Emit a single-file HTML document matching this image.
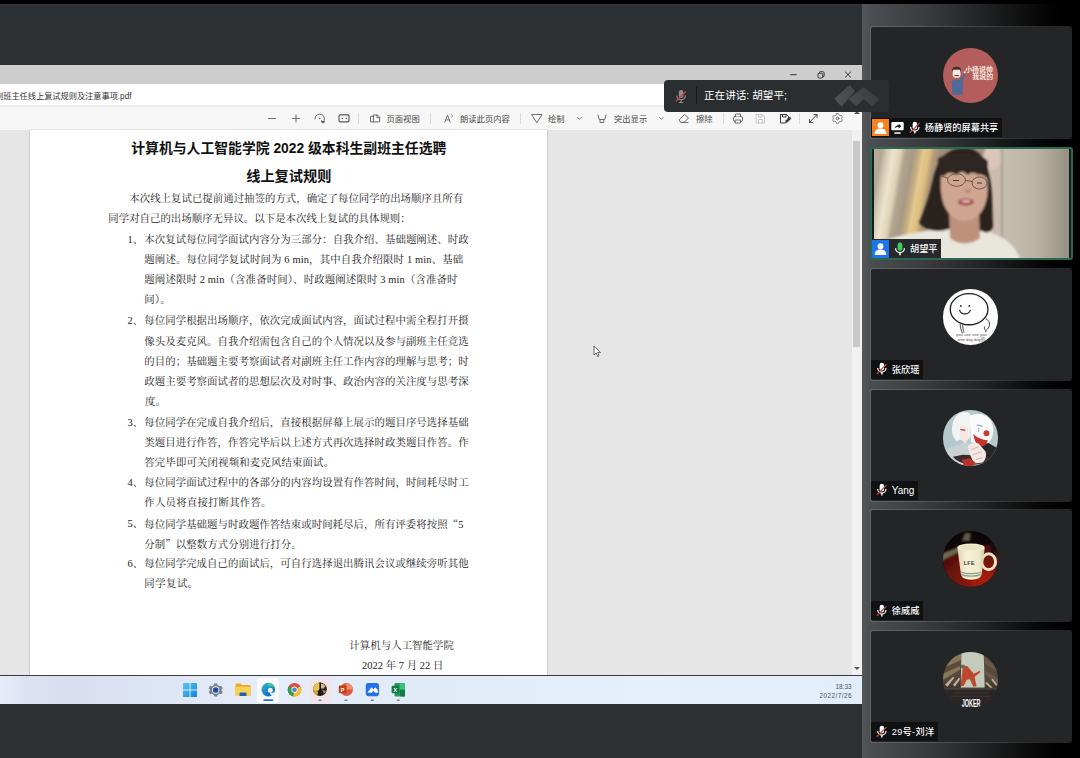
<!DOCTYPE html>
<html lang="zh-CN">
<head>
<meta charset="utf-8">
<title>腾讯会议</title>
<style>
*{box-sizing:border-box;margin:0;padding:0}
html,body{width:1080px;height:758px;overflow:hidden;background:#2c3033}
body{position:relative;font-family:"Liberation Sans","Noto Sans CJK SC",sans-serif;color:#222}
.abs{position:absolute}
#topblack{left:0;top:0;width:1080px;height:4px;background:#000}
#topline{left:0;top:4px;width:862px;height:2px;background:#323537}
/* shared screen */
#share{left:0;top:65px;width:862px;height:639px;overflow:hidden;background:#e6e6e6}
#wtitle{left:0;top:0;width:862px;height:19px;background:#cdcdcd}
#fname{left:0;top:19px;width:862px;height:21px;background:#fff}
#fname span{position:absolute;left:-5px;top:6.5px;font-size:8.2px;line-height:11px;color:#333;white-space:nowrap}
#tbar{left:0;top:40px;width:862px;height:25px;background:#f7f7f7;border-top:2px solid #ececec}
#tbar .t{position:absolute;top:6.9px;font-size:8.3px;line-height:11px;color:#4a4a4a;white-space:nowrap}
#tbar .sep{position:absolute;top:5.5px;width:1px;height:11px;background:#dadada}
#pdf{left:0;top:65px;width:852px;height:546px;background:#e6e6e6}
#page{left:30px;top:0;width:517px;height:546px;background:#fff;box-shadow:0 0 1.5px rgba(0,0,0,.35)}
#sbar{left:852px;top:65px;width:10px;height:546px;background:#f1f1f1}
#sthumb{left:853px;top:76px;width:7px;height:206px;background:#c8c8c8}
#task{left:0;top:610px;width:862px;height:29px;background:linear-gradient(90deg,#e7eefa 0%,#dde2f3 3%,#d9ddf0 8%,#dde4f4 17%,#e5edf9 30%,#e1ebf8 50%,#e6f0fb 75%,#e1edf9 100%);border-top:1px solid #3a3d40}
/* pdf text */
.h{position:absolute;white-space:nowrap;font-family:"Liberation Sans","Noto Sans CJK SC",sans-serif;font-weight:700;color:#111;text-align:center;left:0;width:517px}
.l{position:absolute;white-space:nowrap;font-family:"Liberation Serif","Noto Serif CJK SC",serif;font-size:10.4px;line-height:14px;color:#222;height:14px}
.j{text-align:justify;text-align-last:justify}
/* right panel */
#panel{left:862px;top:4px;width:218px;height:754px;background:linear-gradient(90deg,#54585b 0%,#4b4e51 4%,#3a3c3e 28%,#222324 55%,#060606 83%,#000 92%)}
.tile{position:absolute;left:7.8px;width:202.4px;height:113px;background:#232527;background-clip:padding-box;border:1px solid rgba(255,255,255,.14);border-radius:3px;overflow:hidden}
.av{position:absolute;left:71.8px;top:20.8px;width:55.6px;height:55.6px;border-radius:50%;overflow:hidden}
.lab{position:absolute;left:0;bottom:1px;height:19px;background:#101112;color:#fff;font-weight:500;font-size:9.2px;line-height:20.4px;white-space:nowrap;padding:0 3.5px 0 32px}
.tile svg{display:block}
.av>svg{width:55.6px;height:55.6px}
.lab svg.mic{position:absolute;left:5px;top:2.4px}
.lab.l2{padding-left:21px}
.vt{border:2px solid #2b6850;background:#1a1c1d}
.q{font-family:"Noto Serif CJK SC",serif}
</style>
</head>
<body>
<div class="abs" id="topblack"></div>
<div class="abs" id="topline"></div>

<div class="abs" id="share">
  <div class="abs" id="wtitle">
    <svg class="abs" style="left:780px;top:0" width="82" height="19" viewBox="0 0 82 19" fill="none" stroke="#333" stroke-width="1">
      <path d="M10.300 9.700h6.400"/>
      <rect x="38" y="8.300" width="4.600" height="4.800" rx="1.100"/><path d="M39.300 8.300v-.6a1 1 0 0 1 1-1h2.600a1.200 1.200 0 0 1 1.200 1.200v2.800a1 1 0 0 1-1 1h-.5"/>
      <path d="M65.200 6.800l5.600 5.600M70.800 6.800l-5.600 5.600"/>
    </svg>
  </div>
  <div class="abs" id="fname"><span>副班主任线上复试规则及注意事项.pdf</span></div>
  <div class="abs" id="tbar">
    <svg class="abs" style="left:260px;top:-1.700px" width="602" height="24" viewBox="260 0 602 24" fill="none" stroke="#666" stroke-width=".95" stroke-linecap="round" stroke-linejoin="round">
      <!-- minus / plus -->
      <path d="M268.5 13.5h7M292.5 13.5h7M296 10v7"/>
      <!-- rotate -->
      <path d="M314.900 14a4.800 4.800 0 1 1 8 3.400"/><path d="M321.300 16.300l1.300 1.700 1.700-1z" fill="#555" stroke="#555"/><circle cx="319.700" cy="13.500" r=".8" fill="#555" stroke="none"/>
      <!-- fit width -->
      <rect x="339" y="9.800" width="10" height="7" rx="1.300" stroke="#555" stroke-width="1.150"/><circle cx="342.300" cy="13.400" r=".75" fill="#555" stroke="none"/><circle cx="346.300" cy="13.400" r=".75" fill="#555" stroke="none"/>
      <!-- page view -->
      <path d="M373.800 10h3.600l2.300 2.300v4.600h-5.900zM373.800 11.300h-3.300v5.600h3.300M377 10v2.700h2.700"/>
      <!-- read aloud A -->
      <path d="M444.800 17.300l2.700-7.300 2.700 7.300M445.800 14.900h3.400" stroke-width=".9"/><path d="M451.800 9.800c.8.600.8 1.800 0 2.400" stroke-width=".8"/>
      <!-- draw (triangle pen) -->
      <path d="M532 9.5h10l-5 8z"/>
      <!-- chevrons -->
      <path d="M577.5 12.5l1.8 1.8 1.8-1.8M659.5 12.5l1.8 1.8 1.8-1.8" stroke="#777"/>
      <!-- highlighter -->
      <path d="M598 10l1.300 4.500h5.400l1.300-4.500M600 14.500v3h3.800v-3"/>
      <!-- eraser -->
      <path d="M679.5 14.500l5-5 4 3.5-4.500 4.500h-3zM682 17.5h6"/>
      <!-- print -->
      <rect x="733.5" y="11.500" width="9" height="5" rx="1.500"/><path d="M735.5 11.500v-2.500h5v2.500M735.500 15h5v3h-5z" fill="#f7f7f7"/>
      <!-- save (disabled) -->
      <path d="M756.5 9.500h6l2 2v6.500h-8z M758.500 9.500v2.500h3.500v-2.500 M758.500 18v-3.500h4V18" stroke="#c4c4c4"/>
      <!-- save as -->
      <path d="M780.500 9.500h6l2 2v2.500M785 18h-4.500v-8.500 M782.500 9.500v2.500h3.500v-2.500" stroke="#333"/><path d="M785.500 17.500l.5-2 3.500-3.500 1.500 1.500-3.500 3.500z" fill="#333" stroke="#333" stroke-width=".6"/>
      <!-- fullscreen -->
      <path d="M809.500 17.500l7.500-8M814 9.500h3v3M809.500 14.500v3h3" stroke="#444"/>
      <!-- settings gear -->
      <circle cx="837.500" cy="13.500" r="1.400"/>
      <path d="M836.300 8.800h2.400l.5 1.600 1.500.9 1.600-.4 1.200 2.100-1.100 1.200v1l1.100 1.200-1.200 2.100-1.600-.4-1.500.9-.5 1.600h-2.400l-.5-1.600-1.500-.9-1.600.4-1.200-2.100 1.100-1.200v-1l-1.100-1.200 1.200-2.100 1.600.4 1.500-.9z" transform="translate(837.5 13.500) scale(.82) translate(-837.5 -14.700)"/>
    </svg>
    <div class="sep" style="left:358px"></div>
    <div class="sep" style="left:430px"></div>
    <div class="sep" style="left:520px"></div>
    <div class="sep" style="left:723px"></div>
    <div class="sep" style="left:799px"></div>
    <div class="t" style="left:386.500px">页面视图</div>
    <div class="t" style="left:460px">朗读此页内容</div>
    <div class="t" style="left:548px">绘制</div>
    <div class="t" style="left:614px">突出显示</div>
    <div class="t" style="left:696px">擦除</div>
  </div>
  <div class="abs" id="pdf"><div class="abs" id="page">
    <div class="h" style="top:9.400px;font-size:13.830px;line-height:18px;left:.3px">计算机与人工智能学院 2022 级本科生副班主任选聘</div>
    <div class="h" style="top:37px;font-size:14.200px;line-height:18px;left:.3px">线上复试规则</div>
<div class="l" style="left:99.3px;top:62.0px;letter-spacing:0.044px">本次线上复试已提前通过抽签的方式，确定了每位同学的出场顺序且所有</div>
<div class="l" style="left:78.3px;top:82.3px;letter-spacing:0.037px">同学对自己的出场顺序无异议。以下是本次线上复试的具体规则：</div>
<div class="l" style="left:97.5px;top:102.6px;letter-spacing:0.000px">1、</div>
<div class="l" style="left:114.3px;top:102.6px;letter-spacing:0.074px">本次复试每位同学面试内容分为三部分：自我介绍、基础题阐述、时政</div>
<div class="l" style="left:114.3px;top:123.2px;letter-spacing:0.168px">题阐述。每位同学复试时间为 6 min，其中自我介绍限时 1 min、基础</div>
<div class="l" style="left:114.3px;top:143.2px;letter-spacing:0.154px">题阐述限时 2 min（含准备时间）、时政题阐述限时 3 min（含准备时</div>
<div class="l" style="left:114.3px;top:163.3px;letter-spacing:0.139px">间）。</div>
<div class="l" style="left:97.5px;top:184.4px;letter-spacing:0.000px">2、</div>
<div class="l" style="left:114.3px;top:184.4px;letter-spacing:0.074px">每位同学根据出场顺序，依次完成面试内容，面试过程中需全程打开摄</div>
<div class="l" style="left:114.3px;top:204.7px;letter-spacing:0.074px">像头及麦克风。自我介绍需包含自己的个人情况以及参与副班主任竞选</div>
<div class="l" style="left:114.3px;top:224.9px;letter-spacing:0.074px">的目的；基础题主要考察面试者对副班主任工作内容的理解与思考；时</div>
<div class="l" style="left:114.3px;top:245.2px;letter-spacing:0.074px">政题主要考察面试者的思想层次及对时事、政治内容的关注度与思考深</div>
<div class="l" style="left:115.0px;top:265.4px;letter-spacing:0.000px">度。</div>
<div class="l" style="left:97.5px;top:285.7px;letter-spacing:0.000px">3、</div>
<div class="l" style="left:114.3px;top:285.7px;letter-spacing:0.074px">每位同学在完成自我介绍后，直接根据屏幕上展示的题目序号选择基础</div>
<div class="l" style="left:114.3px;top:306.0px;letter-spacing:0.074px">类题目进行作答，作答完毕后以上述方式再次选择时政类题目作答。作</div>
<div class="l" style="left:114.3px;top:326.2px;letter-spacing:0.159px">答完毕即可关闭视频和麦克风结束面试。</div>
<div class="l" style="left:97.5px;top:346.2px;letter-spacing:0.000px">4、</div>
<div class="l" style="left:114.3px;top:346.2px;letter-spacing:0.074px">每位同学面试过程中的各部分的内容均设置有作答时间，时间耗尽时工</div>
<div class="l" style="left:114.3px;top:366.4px;letter-spacing:0.226px">作人员将直接打断其作答。</div>
<div class="l" style="left:97.5px;top:386.7px;letter-spacing:0.000px">5、</div>
<div class="l" style="left:114.3px;top:386.7px;letter-spacing:0.070px">每位同学基础题与时政题作答结束或时间耗尽后，所有评委将按照<span class="q">“</span>5</div>
<div class="l" style="left:114.3px;top:406.9px;letter-spacing:0.103px">分制<span class="q">”</span>以整数方式分别进行打分。</div>
<div class="l" style="left:97.5px;top:427.0px;letter-spacing:0.000px">6、</div>
<div class="l" style="left:114.3px;top:427.0px;letter-spacing:0.074px">每位同学完成自己的面试后，可自行选择退出腾讯会议或继续旁听其他</div>
<div class="l" style="left:114.3px;top:447.4px;letter-spacing:0.489px">同学复试。</div>
<div class="l" style="left:319.3px;top:509.0px;letter-spacing:0.079px">计算机与人工智能学院</div>
<div class="l" style="left:332.0px;top:528.6px;letter-spacing:0.058px">2022 年 7 月 22 日</div>
  </div></div>
  <div class="abs" id="sbar"></div>
  <div class="abs" id="sthumb"></div>
  <div class="abs" style="left:854px;top:46px;width:0;height:0;border-left:3px solid transparent;border-right:3px solid transparent;border-bottom:3.500px solid #555"></div>
  <div class="abs" style="left:854px;top:602px;width:0;height:0;border-left:3px solid transparent;border-right:3px solid transparent;border-top:3.500px solid #555"></div>
  <!-- mouse cursor -->
  <svg class="abs" style="left:593px;top:280px" width="9" height="13" viewBox="0 0 9 13"><path d="M1 1v9l2.200-2 1.500 3.500 1.400-.6-1.500-3.400h3z" fill="#fff" stroke="#4a4a4a" stroke-width=".8" stroke-linejoin="round"/></svg>
  <div class="abs" id="task">
    <!-- highlighted app backgrounds -->
    <div class="abs" style="left:257px;top:2px;width:22px;height:25px;border-radius:3px;background:rgba(255,255,255,.75)"></div>
    <div class="abs" style="left:308.500px;top:2px;width:23px;height:25px;border-radius:3px;background:#f2e5ea"></div>
    <svg class="abs" style="left:178px;top:0" width="232" height="28" viewBox="178 0 232 28">
      <defs>
        <linearGradient id="wn" x1="0" y1="0" x2="1" y2="1"><stop offset="0" stop-color="#5cc6f5"/><stop offset="1" stop-color="#1583d8"/></linearGradient>
        <linearGradient id="eg" x1="0" y1="0" x2="1" y2="1"><stop offset="0" stop-color="#35c1a6"/><stop offset=".5" stop-color="#1b86d9"/><stop offset="1" stop-color="#0c59a4"/></linearGradient>
      </defs>
      <g filter="url(#b1)">
      <!-- windows -->
      <path d="M183 7h6.500v6.500H183zM190.500 7h6.500v6.500h-6.500zM183 14.500h6.500V21H183zM190.500 14.500h6.500V21h-6.500z" fill="url(#wn)"/>
      <!-- settings gear -->
      <g transform="translate(215.700 14) scale(.92)">
        <path d="M-1.600-7.200h3.200l.6 2 1.800 1 2-.5 1.600 2.800-1.400 1.500v.8l1.400 1.500-1.600 2.800-2-.5-1.800 1-.6 2h-3.200l-.6-2-1.800-1-2 .5-1.600-2.800 1.400-1.500v-.8l-1.400-1.500 1.600-2.800 2 .5 1.800-1z" fill="#77818f"/>
        <circle r="4" fill="#e9eef6"/><circle r="3.100" fill="#2c5aa6"/><circle r="1.300" fill="#1b3a73"/>
      </g>
      <!-- folder -->
      <path d="M235.500 8.500q0-1 1-1h4l1.500 1.500h7.500q1 0 1 1V19q0 1-1 1h-13q-1 0-1-1z" fill="#e9a923"/>
      <path d="M235.500 10.800h15V19q0 1-1 1h-13q-1 0-1-1z" fill="#f9d153"/>
      <path d="M239.500 20v-2.600q0-1 1-1h5q1 0 1 1V20z" fill="#1f63b8"/>
      <!-- edge -->
      <circle cx="268.300" cy="13.600" r="6.800" fill="url(#eg)"/>
      <path d="M268.300 6.800a6.800 6.800 0 0 1 6.800 6.300c-1.500-2.800-5-3.600-7.300-2.300z" fill="#3fc98c"/>
      <circle cx="270.300" cy="14.300" r="2.500" fill="#f2f7fd"/>
      <path d="M270 16.600c1.800.9 4 .3 5-1.300-.3 2-1.500 3.600-3 4.400-1.500-.6-2.300-1.700-2-3.100z" fill="#e7eefa"/>
      <rect x="263.300" y="23.200" width="10" height="1.800" rx=".9" fill="#1f77d0"/>
      <!-- chrome -->
      <circle cx="294.500" cy="13.700" r="6.800" fill="#e24a3a"/>
      <path d="M294.500 13.700L288.600 10.300A6.800 6.800 0 0 0 293.300 20.400z" fill="#2f9e4f"/>
      <path d="M294.500 13.700L293.300 20.400A6.800 6.800 0 0 0 300.400 10.300z" fill="#f5c230"/>
      <circle cx="294.500" cy="13.700" r="3.100" fill="#f4f4f4"/><circle cx="294.500" cy="13.700" r="2.300" fill="#4a86e0"/>
      <!-- photo app -->
      <circle cx="320" cy="13.300" r="6.800" fill="#28231d"/>
      <path d="M320 6.500a6.800 6.800 0 0 0-6.700 8l3.500 1 3.200-2.500z" fill="#e8c648"/>
      <path d="M313.600 15.500l3-1 1.500 2-1 3a6.800 6.800 0 0 1-3.500-4z" fill="#cfa93a"/>
      <path d="M321 7.500c2 .2 3.500 1.200 4.300 2.600l-1.800 2.600-2.500-.5z" fill="#d7b98c"/>
      <path d="M322.500 13.500l3.500 1.500-.5 2.500-2.500-1z" fill="#9a7a55"/>
      <path d="M320 6.500v13.600" stroke="#17130f" stroke-width="1.100"/>
      <rect x="318.500" y="23.600" width="3" height="1.300" rx=".6" fill="#7b7f86"/>
      <!-- powerpoint -->
      <g transform="translate(-1 0)">
      <circle cx="347.500" cy="13.500" r="6.500" fill="#dd5a38"/>
      <path d="M347.500 7a6.500 6.500 0 0 1 6.500 6.500h-6.500z" fill="#f0906c"/>
      <rect x="339.800" y="9.600" width="7.600" height="7.600" rx="1" fill="#c5401f"/>
      <text x="343.600" y="15.800" text-anchor="middle" font-family="'Liberation Sans',sans-serif" font-weight="700" font-size="6" fill="#fff">P</text>
      <rect x="345.500" y="23.600" width="3" height="1.300" rx=".6" fill="#7b7f86"/>
      </g>
      <!-- tencent meeting -->
      <rect x="365.800" y="7" width="13.200" height="13.200" rx="2.400" fill="#2271e8"/>
      <path d="M367.500 16.500l3.300-4.500q.8-.9 1.600 0l1 1.400 1-1.400q.8-.9 1.600 0l2 2.600v2.200h-3l-1.600-2-1.600 2z" fill="#fff"/>
      <rect x="370.800" y="23.600" width="3" height="1.300" rx=".6" fill="#7b7f86"/>
      <!-- excel -->
      <rect x="394.500" y="7" width="10.500" height="13.500" rx="1.200" fill="#1f9d5a"/>
      <path d="M399.800 7h5.200v6.700h-5.200z" fill="#35c47a"/><path d="M399.800 13.700h5.200v6.800h-4q-1.200 0-1.200-1.200z" fill="#167a45"/>
      <rect x="391.600" y="9.800" width="7.400" height="7.400" rx="1" fill="#127a42"/>
      <text x="395.300" y="15.700" text-anchor="middle" font-family="'Liberation Sans',sans-serif" font-weight="700" font-size="5.600" fill="#fff">X</text>
      <rect x="396.800" y="23.600" width="3" height="1.300" rx=".6" fill="#7b7f86"/>
      </g>
    </svg>
    <div class="abs" style="right:10.500px;top:5.500px;font-size:6.400px;line-height:9.500px;color:#4c4f55;text-align:right;white-space:nowrap">18:33<br><span style="letter-spacing:.45px;margin-right:-.45px">2022/7/26</span></div>
  </div>
</div>
<div class="abs" id="panel">
  <svg width="0" height="0" style="position:absolute">
    <defs>
      <symbol id="micoff" viewBox="0 0 12 14">
        <rect x="3.8" y="0.8" width="4.6" height="8" rx="2.300" fill="#fff"/>
        <path d="M1.800 6.200a4.300 4.300 0 0 0 8.600 0" stroke="#fff" fill="none" stroke-width="1.300"/>
        <path d="M6.100 10.500v2.500" stroke="#fff" stroke-width="1.400"/>
        <path d="M0.800 12.200L11 2.200" stroke="#c9453c" stroke-width="1.300"/>
      </symbol>
      <symbol id="user" viewBox="0 0 18 18">
        <circle cx="9" cy="6.300" r="3.100" fill="#fff"/>
        <path d="M2.800 15.500c0-3.600 2.600-5.600 6.200-5.600s6.200 2 6.200 5.600z" fill="#fff"/>
      </symbol>
      <filter id="b1" x="-5%" y="-5%" width="110%" height="110%"><feGaussianBlur stdDeviation="0.600"/></filter>
      <filter id="b2" x="-10%" y="-10%" width="120%" height="120%"><feGaussianBlur stdDeviation="1.300"/></filter>
      <filter id="b3" x="-20%" y="-20%" width="140%" height="140%"><feGaussianBlur stdDeviation="2.500"/></filter>
    </defs>
  </svg>

  <!-- tile 1 : screen sharer -->
  <div class="tile" style="top:21.800px">
    <div class="av" style="background:#b55d5c">
      <svg width="56" height="56" viewBox="0 0 56 56">
        <g filter="url(#b1)">
          <path d="M8.500 33.500l3-1.500h5l3.500-4.500 1.500-4 1.200.600-1.200 5-1.500 4.400v13.500h-10.500z" fill="#4d6b98"/>
          <rect x="9.800" y="20.500" width="7.800" height="9.500" rx="2.500" fill="#f1e9e2"/>
          <path d="M9.300 24.500v-2.500c0-2 1.500-3 4.400-3s4.400 1 4.400 3v2.500l-1.200-2.500h-6.400z" fill="#45302b"/>
          <path d="M11.500 27.300h4.500v1h-4.500z" fill="#45302b"/>
          <circle cx="21.800" cy="24.500" r="1.100" fill="#f1e9e2"/>
        </g>
        <text x="22.300" y="24.200" font-family="'Liberation Sans','Noto Sans CJK SC',sans-serif" font-weight="700" font-size="7" fill="#f6e7da">小杨说帅</text>
        <text x="29.500" y="31.200" font-family="'Liberation Sans','Noto Sans CJK SC',sans-serif" font-weight="700" font-size="7" fill="#f6e7da">我说的</text>
      </svg>
    </div>
    <div class="lab" style="padding-left:54px">
      <span style="position:absolute;left:1px;top:1px;width:17px;height:17.500px;background:#f6821f"><svg width="17" height="17.500"><use href="#user" x="0" y="0" width="17" height="17.500"/></svg></span>
      <svg style="position:absolute;left:20px;top:4px" width="13" height="12" viewBox="0 0 13 12"><rect x="0.300" y="0" width="12.400" height="8.300" rx="1" fill="#fff"/><rect x="3.300" y="10.200" width="6.400" height="1.500" rx=".5" fill="#fff"/><path d="M3.600 6.600c.4-2.200 2-3.300 4-3.300v-1.500l2.700 2.400-2.700 2.400v-1.500c-1.600 0-2.900.3-4 1.500z" fill="#1a1a1a"/></svg>
      <svg style="position:absolute;left:38px;top:3px" width="11.500" height="13.500"><use href="#micoff" width="11.500" height="13.500"/></svg>
      杨静贤的屏幕共享
    </div>
  </div>

  <!-- tile 2 : speaking video -->
  <div class="tile vt" style="top:142.700px;left:7.500px;width:203.200px;height:113.500px">
    <svg style="position:absolute;left:2px;top:0.500px" width="195" height="109" viewBox="0 0 195 109">
      <defs>
        <linearGradient id="cur" gradientUnits="userSpaceOnUse" x1="0" x2="150" y1="0" y2="0"><stop offset="0.0000" stop-color="#b7ad9c"/><stop offset="0.0533" stop-color="#b3a793"/><stop offset="0.0933" stop-color="#d6ccb5"/><stop offset="0.1333" stop-color="#ece4cc"/><stop offset="0.1800" stop-color="#dfd3b7"/><stop offset="0.2133" stop-color="#b3a691"/><stop offset="0.2667" stop-color="#a69985"/><stop offset="0.3067" stop-color="#c7ae82"/><stop offset="0.3333" stop-color="#e4c88f"/><stop offset="0.3733" stop-color="#ddbe7e"/><stop offset="0.4067" stop-color="#b39a78"/><stop offset="0.4533" stop-color="#9c8c78"/><stop offset="1.0000" stop-color="#a39380"/></linearGradient>
        <linearGradient id="wall" x1="0" x2="1" y1="0" y2="0">
          <stop offset="0" stop-color="#c6bfb0"/><stop offset=".5" stop-color="#bbb4a4"/><stop offset="1" stop-color="#948e7f"/>
        </linearGradient>
        <clipPath id="vc"><rect width="195" height="109"/></clipPath>
      </defs>
      <g clip-path="url(#vc)">
        <rect width="195" height="109" fill="#b3a794"/>
        <rect x="0" y="0" width="150" height="109" fill="url(#cur)" transform="skewX(-10)"/>
        <rect x="113" y="0" width="17" height="109" fill="#cbbbae"/>
        <rect x="127" y="0" width="70" height="109" fill="url(#wall)"/>
        <g filter="url(#b2)">
          <ellipse cx="118" cy="8" rx="9" ry="12" fill="#dcc6ba"/>
          <path d="M128 0v109" stroke="#a9a192" stroke-width="2"/>
          <!-- shirt -->
          <path d="M-2 112l0-14c10-8 30-12 52-16l26-3c6 14 24 14 30 2l12 3c16 6 24 14 29 28z" fill="#e9e6de"/>
          <!-- hair -->
          <path d="M90 -1C70 -1 63 14 59 30C55 48 50 62 45 74C52 82 64 84 75 80L108 82C112 85 118 83 119 77C118 60 119 44 116 30C113 12 106 -1 90 -1Z" fill="#2a221d"/>
          <!-- neck -->
          <path d="M75 60l30 3 1 26c-8 7-23 7-30 0z" fill="#bd917b"/>
          <!-- face -->
          <path d="M67 28C67 21 112 21 113 30C115 42 113 54 108 62C103 69 96 72 90 72C82 72 74 66 70 56C67 48 66 38 67 28Z" fill="#cea691"/>
          <!-- bangs -->
          <path d="M64 10C76 1 104 1 114 12L114 27L108 23L104 26L99 22L94 26L88 22L82 26L76 22L70 27L65 27Z" fill="#2e2520"/>
          <!-- lips -->
          <ellipse cx="92" cy="53" rx="8" ry="3.400" fill="#a9484f"/>
          <ellipse cx="92" cy="52.300" rx="4.500" ry="1.200" fill="#e3c4bf"/>
          <ellipse cx="94" cy="42" rx="3" ry="2" fill="#b98a76"/>
        </g>
        <g filter="url(#b1)" fill="none" stroke="#6c5a4c" stroke-width="1">
          <ellipse cx="82.500" cy="31" rx="9" ry="6.300"/><ellipse cx="105.500" cy="34" rx="7.500" ry="6"/><path d="M91.500 31.500l6.500 1M73.500 29l-7-2M113 33l4-1"/>
          <path d="M79 31.500h6M103 34h5" stroke="#4a3a30" stroke-width="1.200"/>
        </g>
      </g>
    </svg>
    <div class="lab l2" style="left:-1px;bottom:0;height:19px;padding-left:39.500px;padding-right:3px;background:#26282a">
      <span style="position:absolute;left:1px;top:1px;width:17px;height:17.500px;background:#1e74ea"><svg width="17" height="17.500"><use href="#user" width="17" height="17.500"/></svg></span>
      <svg style="position:absolute;left:23px;top:2.500px" width="12" height="14" viewBox="0 0 12 14"><rect x="3.600" y="0.500" width="4.800" height="8.500" rx="2.400" fill="#3ecb53"/><path d="M1.600 6.200a4.400 4.400 0 0 0 8.800 0" stroke="#fff" fill="none" stroke-width="1.300"/><path d="M6 10.500v2.800" stroke="#fff" stroke-width="1.500"/></svg>
      胡望平
    </div>
  </div>

  <!-- tile 3 -->
  <div class="tile" style="top:263.700px">
    <div class="av" style="background:#fdfdfd">
      <svg width="56" height="56" viewBox="0 0 56 56">
        <g filter="url(#b1)" fill="none" stroke="#1d1d1d" stroke-width="1.300" stroke-linecap="round">
          <ellipse cx="26.300" cy="20.300" rx="19" ry="15.700"/>
          <path d="M16.800 21.500c1.500 4.800 8.800 4.800 10.600 0" stroke-width="1.200"/>
          <path d="M18 17h.1M26.500 17h.1" stroke-width="1.800"/>
          <path d="M17.300 35.500c.2 3.500 1 6.500 2.300 9M19.800 36c0 3 .5 5.500 1.300 7.500" stroke-width=".8"/>
          <path d="M43.500 30c3.500 2 4.500 6 2 9.500c-1 1.500-2.500 1.500-2.500 3.500M42 38c-.6 1.300-.3 2.500.5 3.500" stroke-width=".9"/>
        </g>
        <text x="28.700" y="47.600" text-anchor="middle" font-family="'Liberation Sans',sans-serif" font-size="4.300" fill="#555">you see see you</text>
        <text x="28.700" y="52.700" text-anchor="middle" font-family="'Liberation Sans','Noto Sans CJK SC',sans-serif" font-size="4.300" fill="#555">one day day的</text>
      </svg>
    </div>
    <div class="lab l2"><svg class="mic" width="11.500" height="13.500"><use href="#micoff" width="11.500" height="13.500"/></svg>张欣瑶</div>
  </div>

  <!-- tile 4 -->
  <div class="tile" style="top:384.600px">
    <div class="av" style="background:#b5c9cc">
      <svg width="56" height="56" viewBox="0 0 56 56">
        <g filter="url(#b1)">
          <path d="M2 40l22-8 10 8-6 18H4z" fill="#c9d1d2"/>
          <path d="M40 30l14 8v14l-12 6-8-14z" fill="#26272b"/>
          <path d="M9 20C9 8 15 2 22 2s6 4 6 10l-1 16-6 4c-3-3-5-3-7 0-3-4-5-7-5-12z" fill="#f2f4f4"/>
          <path d="M17 16l8 1 1 12-4 5-5-6z" fill="#f3e6e3"/>
          <path d="M17.500 19.500l5 1" stroke="#b5434a" stroke-width="1.300"/>
          <path d="M27 6c8-4 18-2 22 6 3 7 2 15-3 21l-8 3-10-4z" fill="#fafafa"/>
          <path d="M34 15l6 1.500" stroke="#9fb2b8" stroke-width="1.500"/>
          <path d="M36 18v4" stroke="#8fb0c0" stroke-width="1"/>
          <circle cx="43.800" cy="23.400" r="3" fill="#cf3a30"/>
          <path d="M30.500 24c3 3.500 8 6 14.500 6.500-.5 4.500-4 7-8 6-3.500-1-5.500-6-6.500-12.500z" fill="#c4352d"/>
          <path d="M10 47c6 8 26 12 38 2l-6-3-22-1z" fill="#3b2b2d"/><path d="M25 36c3-3 8-4 11-2l7 8c1 4 0 8-3 11l-8 1c-3-4-6-11-7-18z" fill="#f3e7e4"/>
          <path d="M28 40l8-3M30 45l9-3M33 50l7-2" stroke="#c7a9a6" stroke-width=".8"/>
          <path d="M19 50l8-1.500 6 5-3 3.500h-9z" fill="#b8322b"/>
        </g>
      </svg>
    </div>
    <div class="lab l2" style="font-size:10px"><svg class="mic" width="11.500" height="13.500"><use href="#micoff" width="11.500" height="13.500"/></svg>Yang</div>
  </div>

  <!-- tile 5 -->
  <div class="tile" style="top:505.200px">
    <div class="av" style="background:#0c0706">
      <svg width="56" height="56" viewBox="0 0 56 56">
        <defs><radialGradient id="rd" cx=".75" cy=".85" r=".9"><stop offset="0" stop-color="#b4200f"/><stop offset=".45" stop-color="#7d150f"/><stop offset="1" stop-color="#4a0f10"/></radialGradient>
        <linearGradient id="cup" x1="0" x2="1"><stop offset="0" stop-color="#d9d4b2"/><stop offset=".35" stop-color="#f6f2d9"/><stop offset=".8" stop-color="#efe9c9"/><stop offset="1" stop-color="#cfc7a0"/></linearGradient></defs>
        <g filter="url(#b2)">
          <path d="M-2 22l20-6 30-2 10 10v34h-60z" fill="url(#rd)"/>
          <path d="M-2 24l22-10 2 4-24 12z" fill="#6e6d52"/>
          <path d="M22 2h6l-1 8h-8z" fill="#5d5a44"/>
          <path d="M48 10l6 6-1 12-6-4z" fill="#1a0a08"/>
        </g>
        <g filter="url(#b1)">
          <ellipse cx="46" cy="31" rx="7" ry="8" fill="none" stroke="#efe6c6" stroke-width="3"/>
          <path d="M14.500 17h27.500l-3 26c-.5 4-4 6-10.500 6s-10-2-10.500-6z" fill="url(#cup)"/>
          <ellipse cx="28.200" cy="16.500" rx="13.800" ry="3.800" fill="#f3efd2"/>
          <ellipse cx="28.200" cy="16.800" rx="12" ry="2.600" fill="#e9e3c2"/>
          <path d="M18 41.500c6 2 15 2 20.500 0M18.300 44c6 2 14.500 2 19.800 0" stroke="#8fa08a" stroke-width="1.200" fill="none"/>
        </g>
        <text x="26.500" y="34" text-anchor="middle" font-family="'Liberation Sans',sans-serif" font-weight="700" font-size="5.500" fill="#3a3428" letter-spacing=".3">LFE</text>
      </svg>
    </div>
    <div class="lab l2"><svg class="mic" width="11.500" height="13.500"><use href="#micoff" width="11.500" height="13.500"/></svg>徐威威</div>
  </div>

  <!-- tile 6 -->
  <div class="tile" style="top:626.400px">
    <div class="av" style="background:#292829">
      <svg width="56" height="56" viewBox="0 0 56 56">
        <defs><linearGradient id="jk" x1="0" x2="0" y1="0" y2="1"><stop offset="0" stop-color="#5f5140"/><stop offset=".5" stop-color="#54463a"/><stop offset=".68" stop-color="#37302c"/><stop offset="1" stop-color="#272628"/></linearGradient></defs>
        <rect width="56" height="56" fill="url(#jk)"/>
        <g filter="url(#b1)"><g filter="url(#b1)">
          <path d="M18.500 0h22.500l1 36h-24z" fill="#c5cbbb"/>
          <path d="M0 8l18-6v6L0 16zM0 22l17-8v4L0 28z" fill="#8a7759"/>
          <path d="M42 6l14 10v5L42 11zM42 18l14 10v5L42 22z" fill="#6a5a4c"/>
          <path d="M2 33l8-8 1.500 1-7 9zM10 33l6-7 1.500 1-5.500 8zM44 30l6 6-1.500 1-6-5.500zM50 27l5 6-1.500 1-5-6z" fill="#b9ae98"/>
          <path d="M20 15c2-2 5-1 6 1l5 6 6-3 .8 1.200-6 5 2 9-3 1-4-8-3 1-3 6h-3l1-9z" fill="#bb4a30"/>
          <circle cx="20" cy="14.500" r="2" fill="#59704f"/>
          <path d="M0 36h56v3l-56 0z" fill="#4a3f38"/><rect x="0" y="38" width="56" height="18" fill="#2b2828"/>
          <path d="M10 41h36M8 44.500h40" stroke="#3a3432" stroke-width="1"/>
        </g></g>
        <text x="18.800" y="55.300" font-family="'Liberation Sans',sans-serif" font-weight="700" font-size="11.500" fill="#fff" textLength="19" lengthAdjust="spacingAndGlyphs">JOKER</text>
      </svg>
    </div>
    <div class="lab l2"><svg class="mic" width="11.500" height="13.500"><use href="#micoff" width="11.500" height="13.500"/></svg><span style="letter-spacing:.3px">29号-刘洋</span></div>
  </div>
</div>
<div class="abs" id="ov" style="left:664px;top:80px;width:225px;height:31.500px;background:#2b2e31;border-radius:4px;overflow:hidden">
  <svg class="abs" style="left:10.500px;top:8.500px" width="12" height="14.500" viewBox="0 0 12 14">
    <rect x="3.800" y="0.800" width="4.600" height="8" rx="2.300" fill="#8b8d8f"/>
    <path d="M1.800 6.200a4.300 4.300 0 0 0 8.600 0" stroke="#8b8d8f" fill="none" stroke-width="1.200"/>
    <path d="M6.100 10.500v2.500M4 13.300h4.200" stroke="#8b8d8f" stroke-width="1.200"/>
    <path d="M0.800 12.200L11 2.200" stroke="#c9453c" stroke-width="1.200"/>
  </svg>
  <div class="abs" style="left:32px;top:7px;width:1px;height:17px;background:#15171a"></div>
  <div class="abs" style="left:40px;top:8px;font-size:10.600px;line-height:15px;color:#fff;white-space:nowrap">正在讲话: 胡望平;</div>
  <svg class="abs" style="left:166px;top:2px" width="54" height="27" viewBox="0 0 54 27">
    <defs><linearGradient id="lg2" gradientUnits="userSpaceOnUse" x1="5" y1="24" x2="48" y2="4"><stop offset="0" stop-color="#505356"/><stop offset=".5" stop-color="#45484b"/><stop offset="1" stop-color="#35383b"/></linearGradient><linearGradient id="lg1" x1="0" y1="0" x2="1" y2="1"><stop offset="0" stop-color="#55585b"/><stop offset="1" stop-color="#3c3f42"/></linearGradient></defs>
    <g filter="url(#b1)">
      <path d="M5.200 16.700L19.600 4.100L24 9L11.500 23.400z" fill="url(#lg2)" stroke="url(#lg2)" stroke-width="1.500" stroke-linejoin="round"/>
      <path d="M19.600 17.100L33.700 6L48.500 17.500L41.900 23L33.700 16L26.300 23z" fill="url(#lg2)" stroke="url(#lg2)" stroke-width="1.500" stroke-linejoin="round"/>
    </g>
  </svg>
</div>
</body>
</html>
